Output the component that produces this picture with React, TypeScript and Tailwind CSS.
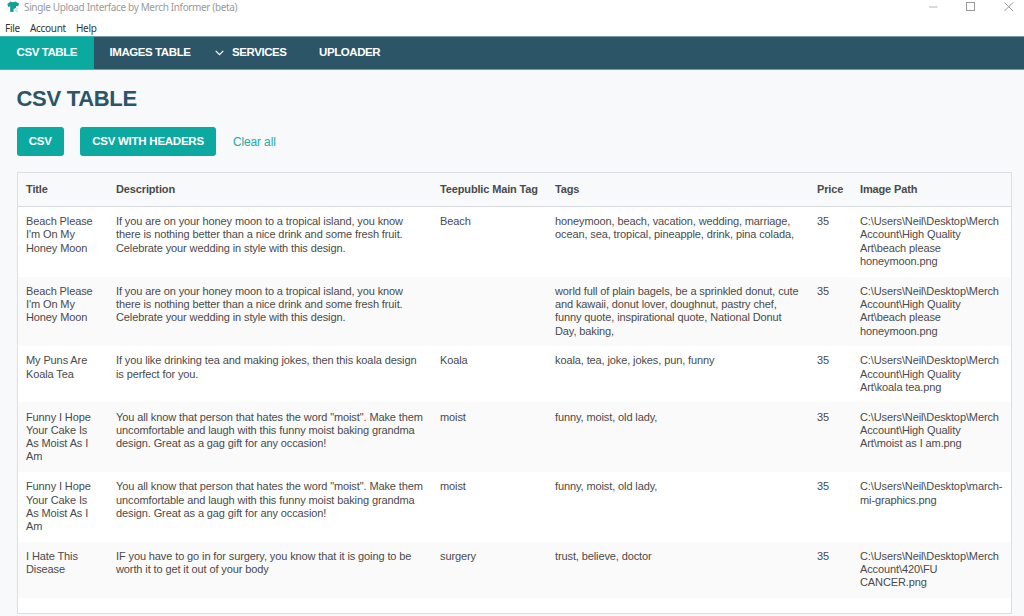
import clsx from "clsx"
import { Fragment } from "react"

const COLUMNS = ["Title", "Description", "Teepublic Main Tag", "Tags", "Price", "Image Path"]

// Cell text is kept as lines so the wrapping stays fixed
const ROWS = [
  {
    title: ["Beach Please", "I'm On My", "Honey Moon"],
    description: [
      "If you are on your honey moon to a tropical island, you know",
      "there is nothing better than a nice drink and some fresh fruit.",
      "Celebrate your wedding in style with this design.",
    ],
    mainTag: ["Beach"],
    tags: [
      "honeymoon, beach, vacation, wedding, marriage,",
      "ocean, sea, tropical, pineapple, drink, pina colada,",
    ],
    price: ["35"],
    path: ["C:\\Users\\Neil\\Desktop\\Merch", "Account\\High Quality", "Art\\beach please", "honeymoon.png"],
  },
  {
    title: ["Beach Please", "I'm On My", "Honey Moon"],
    description: [
      "If you are on your honey moon to a tropical island, you know",
      "there is nothing better than a nice drink and some fresh fruit.",
      "Celebrate your wedding in style with this design.",
    ],
    mainTag: [],
    tags: [
      "world full of plain bagels, be a sprinkled donut, cute",
      "and kawaii, donut lover, doughnut, pastry chef,",
      "funny quote, inspirational quote, National Donut",
      "Day, baking,",
    ],
    price: ["35"],
    path: ["C:\\Users\\Neil\\Desktop\\Merch", "Account\\High Quality", "Art\\beach please", "honeymoon.png"],
  },
  {
    title: ["My Puns Are", "Koala Tea"],
    description: ["If you like drinking tea and making jokes, then this koala design", "is perfect for you."],
    mainTag: ["Koala"],
    tags: ["koala, tea, joke, jokes, pun, funny"],
    price: ["35"],
    path: ["C:\\Users\\Neil\\Desktop\\Merch", "Account\\High Quality", "Art\\koala tea.png"],
  },
  {
    title: ["Funny I Hope", "Your Cake Is", "As Moist As I", "Am"],
    description: [
      'You all know that person that hates the word "moist". Make them',
      "uncomfortable and laugh with this funny moist baking grandma",
      "design. Great as a gag gift for any occasion!",
    ],
    mainTag: ["moist"],
    tags: ["funny, moist, old lady,"],
    price: ["35"],
    path: ["C:\\Users\\Neil\\Desktop\\Merch", "Account\\High Quality", "Art\\moist as I am.png"],
  },
  {
    title: ["Funny I Hope", "Your Cake Is", "As Moist As I", "Am"],
    description: [
      'You all know that person that hates the word "moist". Make them',
      "uncomfortable and laugh with this funny moist baking grandma",
      "design. Great as a gag gift for any occasion!",
    ],
    mainTag: ["moist"],
    tags: ["funny, moist, old lady,"],
    price: ["35"],
    path: ["C:\\Users\\Neil\\Desktop\\march-", "mi-graphics.png"],
  },
  {
    title: ["I Hate This", "Disease"],
    description: [
      "IF you have to go in for surgery, you know that it is going to be",
      "worth it to get it out of your body",
    ],
    mainTag: ["surgery"],
    tags: ["trust, believe, doctor"],
    price: ["35"],
    path: ["C:\\Users\\Neil\\Desktop\\Merch", "Account\\420\\FU", "CANCER.png"],
  },
]

const GRID = "grid grid-cols-[90px_324px_115px_262px_43px_1fr]"

function TitleBar() {
  return (
    <header className="flex h-[17px] items-start justify-between bg-white pl-[7px] pr-[9px]">
      <div className="flex items-start">
        <svg width="13" height="12" viewBox="0 0 13 12" className="mt-px">
          <path d="M0.3 3 3.6 0.4Q6 2 8.4 0.4L12 2.4 11.2 5.2 9.1 4.9V7L6.5 8V11H3.2V5.4L1.4 6Z" fill="#159f99" />
          <path d="M11 7.4 8.8 8.5V10L11 10.5" fill="none" stroke="#9fd5d2" strokeWidth="0.9" />
        </svg>
        <span className="ml-1 whitespace-nowrap text-[10px] leading-[15px] tracking-[-0.36px] text-[#9a9a9a]">
          Single Upload Interface by Merch Informer (beta)
        </span>
      </div>
      <svg width="87" height="12" viewBox="0 0 87 12" className="mt-px" fill="none" stroke="#999" strokeWidth="1">
        <path d="M1 6h8.5" stroke="#b5b5b5" />
        <rect x="38.5" y="1.5" width="8" height="8" />
        <path d="m76.5 1.5 8.5 8.5m0-8.5-8.5 8.5" />
      </svg>
    </header>
  )
}

function Lines({ lines }: { lines: string[] }) {
  return (
    <div className="whitespace-nowrap pl-[8.5px]">
      {lines.map((line, i) => (
        <Fragment key={i}>
          {i > 0 && <br />}
          {line}
        </Fragment>
      ))}
    </div>
  )
}

export default function App() {
  return (
    <div className="flex h-[616px] w-[1024px] flex-col overflow-hidden bg-[#f7f9fb] font-['Liberation_Sans',Arial,sans-serif]">
      <div className="bg-white font-['Noto_Sans','Open_Sans',sans-serif]">
        <TitleBar />
        <div className="flex h-[19px] gap-[10px] pl-[5px] pt-[4px] text-[10px] leading-[14px] tracking-[-0.28px] text-[#333]">
          <span>File</span>
          <span>Account</span>
          <span>Help</span>
        </div>
      </div>

      <nav className="flex h-[34px] shrink-0 border-y border-[#7697a3] bg-[#2c5567] text-[11.5px] font-bold leading-[31px] tracking-[-0.42px] text-white">
        <a className="-my-px w-[94px] border-y border-[#43b7b1] bg-[#0ba99f] pl-[16.5px]">CSV TABLE</a>
        <a className="ml-[15.5px] w-[105.5px]">IMAGES TABLE</a>
        <a className="flex w-[104px]">
          <svg width="9" height="6" viewBox="0 0 9 6" className="mr-[8px] mt-[13px]">
            <path d="m0.7 0.8 3.8 3.8L8.3 0.8" fill="none" stroke="white" strokeWidth="1.2" />
          </svg>
          SERVICES
        </a>
        <a>UPLOADER</a>
      </nav>

      <main className="px-[16.5px] pt-[14px]">
        <h1 className="text-[22px] font-bold leading-[30px] tracking-[-0.3px] text-[#2c5567]">CSV TABLE</h1>
        <div className="mt-[13px] flex h-[29px] items-center text-[11.5px] tracking-[-0.25px]">
          <button className="h-[29px] w-[47.5px] rounded-[3px] bg-[#0ba99f] pt-px font-bold text-white">CSV</button>
          <button className="ml-[16px] h-[29px] w-[136px] rounded-[3px] bg-[#0ba99f] pt-px font-bold text-white">
            CSV WITH HEADERS
          </button>
          <button className="ml-[17px] mt-px text-[12px] tracking-[-0.15px] text-[#26aaa2]">Clear all</button>
        </div>

        <div className="mt-[16px] h-[442px] w-[995px] border border-[#dcdfe1] bg-white text-[11px] tracking-[-0.11px] text-[#4a4a4a]">
          <div className={clsx(GRID, "h-[34px] border-b border-[#d9dcde] bg-[#f7f9fb] font-bold leading-[32px]")}>
            {COLUMNS.map((name) => (
              <div key={name} className="whitespace-nowrap pl-[8.5px] tracking-[-0.14px]">
                {name}
              </div>
            ))}
          </div>
          {ROWS.map((row, i) => (
            <div key={i} className={clsx(GRID, "pb-[8.4px] pt-[8.2px] leading-[13.25px]", i % 2 === 1 && "bg-[#fafafa]")}>
              <Lines lines={row.title} />
              <Lines lines={row.description} />
              <Lines lines={row.mainTag} />
              <Lines lines={row.tags} />
              <Lines lines={row.price} />
              <Lines lines={row.path} />
            </div>
          ))}
        </div>
      </main>
    </div>
  )
}
